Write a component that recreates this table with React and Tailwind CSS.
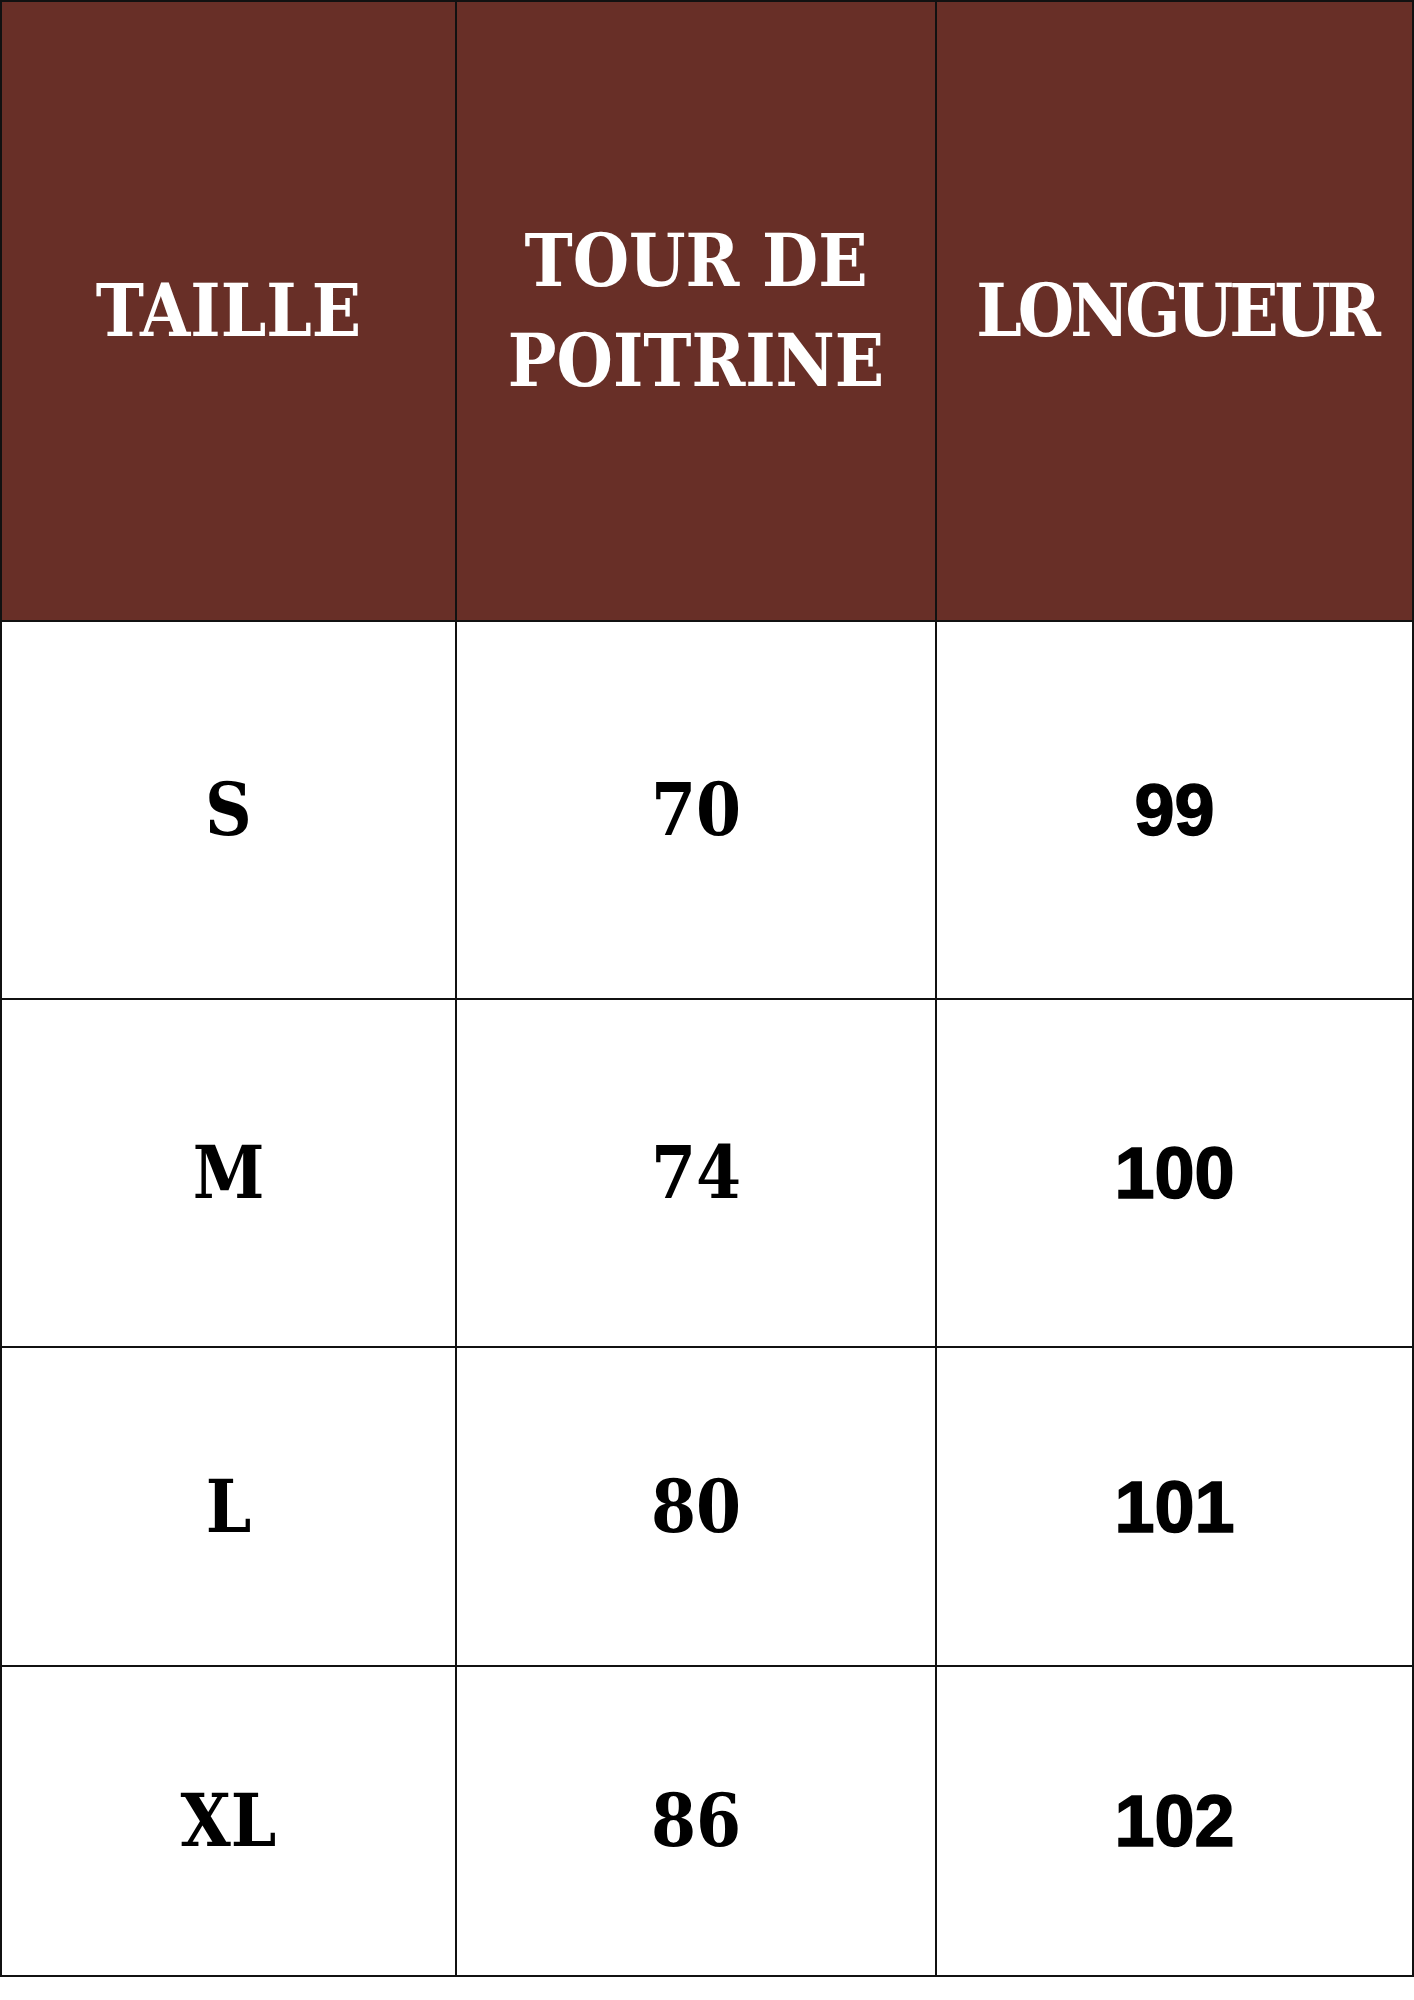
import React from 'react';

const slab = "font-['DejaVu_Serif_Condensed','DejaVu_Serif',serif] [font-stretch:condensed] font-bold";
const sans = "font-['Liberation_Sans',Arial,sans-serif] font-bold";

const rows = [
  { size: 'S', chest: '70', length: '99', h: 'h-[378px]' },
  { size: 'M', chest: '74', length: '100', h: 'h-[348px]' },
  { size: 'L', chest: '80', length: '101', h: 'h-[319px]' },
  { size: 'XL', chest: '86', length: '102', h: 'h-[310px]' },
];

const Cell = ({ className = '', children }) => (
  <div className={`flex items-center justify-center border-r-2 border-b-2 border-[#111] text-center ${className}`}>
    {children}
  </div>
);

export default function App() {
  return (
    <div className="w-[1414px] h-[2000px] bg-white">
      <div className="grid grid-cols-[455px_480px_477px] border-t-2 border-l-2 border-[#111]">
        <Cell className={`h-[620px] bg-[#682f27] text-white ${slab} text-[72px] leading-[100px]`}>
          <span>TAILLE</span>
        </Cell>
        <Cell className={`h-[620px] bg-[#682f27] text-white ${slab} text-[72px] leading-[100px]`}>
          <span className="px-10">TOUR DE<br />POITRINE</span>
        </Cell>
        <Cell className={`h-[620px] bg-[#682f27] text-white ${slab} text-[72px] leading-[100px]`}>
          <span className="tracking-[-4px] pl-[4px]">LONGUEUR</span>
        </Cell>

        {rows.map(r => (
          <React.Fragment key={r.size}>
            <Cell className={`${r.h} ${slab} text-[72px] text-black`}>{r.size}</Cell>
            <Cell className={`${r.h} ${slab} text-[72px] text-black`}>{r.chest}</Cell>
            <Cell className={`${r.h} ${sans} text-[72px] text-black [-webkit-text-stroke:1.5px_black]`}>{r.length}</Cell>
          </React.Fragment>
        ))}
      </div>
    </div>
  );
}
